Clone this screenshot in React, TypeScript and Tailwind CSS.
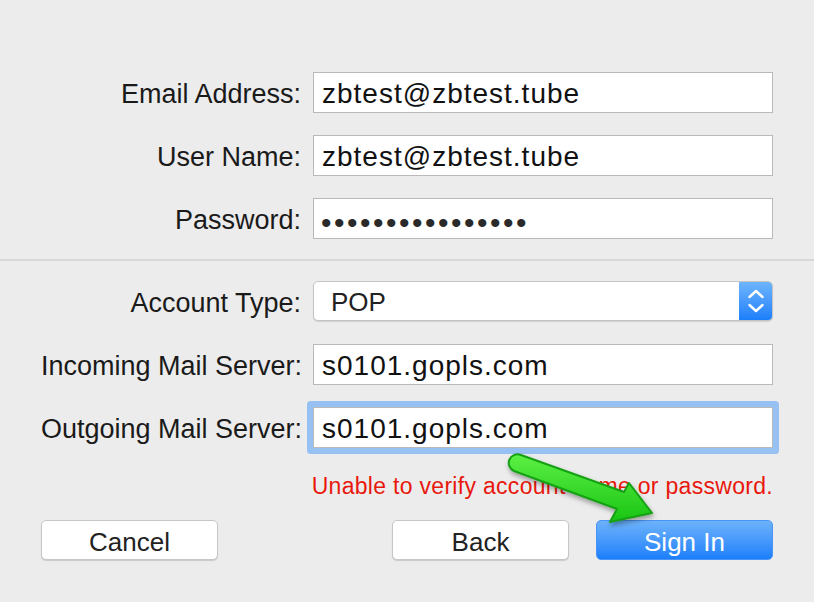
import React from 'react'

const labelCls = "w-[260px] shrink-0 whitespace-nowrap text-right text-[27px] text-[#1a1a1a] leading-none pt-[4px]"
const fieldCls =
  "ml-[12px] w-[460px] h-[41px] bg-white border border-[#b9b9b9] pl-[8px] pt-[3px] text-[28px] tracking-[1px] text-[#111] outline-none font-['Liberation_Sans']"

function Row({ label, value, focused }: { label: string; value: string; focused?: boolean }) {
  return (
    <div className="flex items-center">
      <label className={labelCls}>{label}</label>
      <input
        readOnly
        value={value}
        className={fieldCls + (focused ? " rounded-[1px] shadow-[0_0_0_6px_#97c1f2]" : "")}
      />
    </div>
  )
}

function Arrow() {
  return (
    <svg
      className="absolute left-[500px] top-[445px] pointer-events-none"
      width="170"
      height="90"
      viewBox="0 0 170 90"
    >
      <defs>
        <linearGradient id="grn" x1="0" y1="0" x2="0" y2="1">
          <stop offset="0" stopColor="#5cf044" />
          <stop offset="1" stopColor="#19c414" />
        </linearGradient>
        <filter id="sh" x="-20%" y="-20%" width="140%" height="160%">
          <feDropShadow dx="1" dy="3" stdDeviation="2.5" floodColor="#000" floodOpacity="0.35" />
        </filter>
      </defs>
      <path
        d="M21 10 L124 47 L129 38 L152 68 L110 77 L117 64 L14 26 A8.5 8.5 0 0 1 21 10 Z"
        fill="url(#grn)"
        stroke="#14a012"
        strokeWidth="2"
        strokeLinejoin="round"
        filter="url(#sh)"
      />
    </svg>
  )
}

export default function App() {
  return (
    <div className="relative w-[814px] h-[602px] overflow-hidden bg-[#ececec] font-['Liberation_Sans',Arial,sans-serif]">
      <div className="px-[41px] pt-[72px]">
        <div className="flex flex-col gap-[22px]">
          <Row label="Email Address:" value="zbtest@zbtest.tube" />
          <Row label="User Name:" value="zbtest@zbtest.tube" />
          <div className="flex items-center">
            <label className={labelCls}>Password:</label>
            <div className="ml-[12px] w-[460px] h-[41px] bg-white border border-[#b9b9b9] pl-[7px] flex items-center">
              <span className="text-[30px] tracking-[2.5px] text-[#2a2a2a] leading-none mt-[8px]">
                ••••••••••••••••
              </span>
            </div>
          </div>
        </div>

        <div className="-mx-[41px] mt-[20px] h-[2px] bg-[#d8d8d8]" />

        <div className="mt-[20px] flex items-center">
          <label className={labelCls}>Account Type:</label>
          <div className="ml-[12px] w-[460px] h-[40px] flex rounded-[5px] bg-white border border-[#c4c4c4] shadow-[0_1px_1px_rgba(0,0,0,0.12)] overflow-hidden">
            <div className="flex-1 flex items-center pl-[17px] pt-[3px] text-[26px] text-[#222]">POP</div>
            <div className="w-[33px] bg-linear-to-b from-[#6db4fb] to-[#1a7ffb] flex items-center justify-center">
              <svg width="16" height="26" viewBox="0 0 16 26" fill="none" stroke="white" strokeWidth="2.4" strokeLinecap="round" strokeLinejoin="round">
                <path d="M1.5 9 L8 3 L14.5 9" />
                <path d="M1.5 17 L8 23 L14.5 17" />
              </svg>
            </div>
          </div>
        </div>

        <div className="mt-[23px]">
          <Row label="Incoming Mail Server:" value="s0101.gopls.com" />
        </div>
        <div className="mt-[22px]">
          <Row label="Outgoing Mail Server:" value="s0101.gopls.com" focused />
        </div>

        <div className="mt-[24px] h-[28px] flex items-center justify-end text-[23px] tracking-[0.3px] text-[#e8190c]">
          Unable to verify account name or password.
        </div>

        <div className="mt-[20px] flex">
          <button className="w-[177px] h-[40px] rounded-[5px] bg-white border border-[#c6c6c6] shadow-[0_1px_1px_rgba(0,0,0,0.15)] text-[26px] text-[#222] pt-[2px]">
            Cancel
          </button>
          <button className="ml-auto w-[177px] h-[40px] rounded-[5px] bg-white border border-[#c6c6c6] shadow-[0_1px_1px_rgba(0,0,0,0.15)] text-[26px] text-[#222] pt-[2px]">
            Back
          </button>
          <button className="ml-[27px] w-[177px] h-[40px] rounded-[5px] bg-linear-to-b from-[#6cb2fb] to-[#1a7ffb] border border-[#4a94f5] text-[26px] text-white pt-[2px]">
            Sign In
          </button>
        </div>
      </div>
      <Arrow />
    </div>
  )
}
